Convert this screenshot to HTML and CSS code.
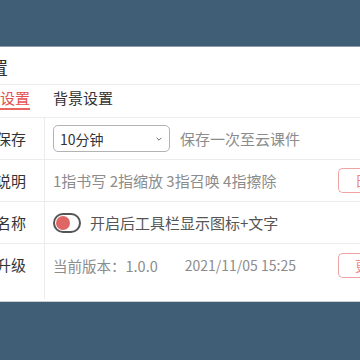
FILE: index.html
```html
<!DOCTYPE html>
<html lang="zh-CN">
<head>
  <meta charset="UTF-8">
  <meta name="viewport" content="width=device-width, initial-scale=1.0">
  <title>设置</title>
  <link rel="stylesheet" href="styles.css">
</head>
<body>
  <div class="top"></div>
  <div class="modal">
    <div class="modal-title">设置</div>
    <div class="tabs">
      <span class="tab active">通用设置</span>
      <span class="tab">背景设置</span>
    </div>
    <div class="table">
      <div class="row">
        <div class="label">自动保存</div>
        <div class="cell">
          <div class="select">
            <span>10分钟</span>
            <svg width="10" height="6" viewBox="0 0 10 6"><path d="M2 1.5 L5 4.5 L8 1.5" fill="none" stroke="#666" stroke-width="1.2"/></svg>
          </div>
          <span class="hint">保存一次至云课件</span>
        </div>
      </div>
      <div class="row">
        <div class="label">手势说明</div>
        <div class="cell">
          <span class="gray big">1指书写 2指缩放 3指召唤 4指擦除</span>
          <span class="btn">日志</span>
        </div>
      </div>
      <div class="row">
        <div class="label">显示名称</div>
        <div class="cell">
          <span class="switch"><i></i></span>
          <span class="dark">开启后工具栏显示图标+文字</span>
        </div>
      </div>
      <div class="row last">
        <div class="label">版本升级</div>
        <div class="cell">
          <span class="gray ver">当前版本：1.0.0</span>
          <span class="gray date">2021/11/05 15:25</span>
          <span class="btn">更新</span>
        </div>
      </div>
      <div class="row foot">
        <div class="label"></div>
        <div class="cell"></div>
      </div>
    </div>
  </div>
</body>
</html>
```

FILE: styles.css
```css
body{ margin: 0; background: #405e75; overflow: hidden; font-family: "Noto Sans CJK SC", "Noto Sans", sans-serif; color: #333;}
.top{ height: 46px; border-bottom: 1px solid #8d9cab;}
.modal{ width: 440px; margin-left: -40px; background: #fff; padding-bottom: 2px; border-bottom: 1px solid #c9cfd5;}
.modal-title{ height: 37px; line-height: 40px; padding-left: 12px; font-size: 18px; border-bottom: 1px solid #ececec;}
.tabs{ height: 33px; box-sizing: border-box; display: flex; gap: 23px; padding-left: 10px; border-bottom: 1px solid #ececec;}
.tab{ font-size: 15px; line-height: 20px; padding-top: 3px; height: 20px; border-bottom: 2px solid transparent;}
.tab.active{ color: #e5514f; border-bottom-color: #ec6461;}
.row{ display: flex; height: 41px; border-bottom: 1px solid #ececec;}
.row.last{ border-bottom: none; height: 42px;}
.row.foot{ border-bottom: none; height: 13px;}
.label{ width: 85px; box-sizing: border-box; border-right: 1px solid #ececec; text-align: right; padding-right: 18px; font-size: 15px; line-height: 41px;}
.cell{ flex: 1; display: flex; align-items: center; padding-left: 8px;}
.select{ width: 117px; height: 27px; box-sizing: border-box; border: 1px solid #b3b3b3; border-radius: 5px; display: flex; align-items: center; justify-content: space-between; padding: 0 6px 0 6px; font-size: 14px; color: #333;}
.select svg{ width: 8px;}
.hint{ margin-left: 10px; font-size: 15px; color: #8c8c8c;}
.gray{ font-size: 14px; color: #8c8c8c;}
.gray.big{ font-size: 15px;}
.gray.ver{ font-size: 14.5px;}
.date{ margin-left: 27px;}
.dark{ font-size: 15px; color: #555;}
.btn{ margin-left: auto; width: 62px; height: 25px; box-sizing: border-box; border: 1px solid #f0a3a3; border-right: none; border-radius: 5px 0 0 5px; color: #f08585; font-size: 14px; line-height: 23px; padding-left: 16px;}
.switch{ width: 28px; height: 20px; box-sizing: border-box; border: 2px solid #555; border-radius: 10px; margin-right: 9px; display: flex; align-items: center; padding-left: 1px;}
.switch i{ width: 14px; height: 14px; border-radius: 50%; background: #e06666;}
```
